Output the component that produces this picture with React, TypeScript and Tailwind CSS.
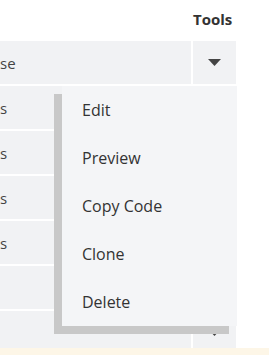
const rows = ['se', 's', 's', 's', 's', '', '']

function Caret() {
  return (
    <svg width="13" height="7" viewBox="0 0 13 7" className="block">
      <path d="M0 0h13L6.5 7z" fill="#444" />
    </svg>
  )
}

const menuItems = ['Edit', 'Preview', 'Copy Code', 'Clone', 'Delete']

export default function App() {
  return (
    <div
      className="relative w-[269px] h-[355px] overflow-hidden bg-white text-[#444]"
      style={{ fontFamily: '"Open Sans", Lato, sans-serif' }}
    >
      <div className="flex h-[41px] w-[236px]">
        <div className="flex-1" />
        <div className="w-[43px] pt-[8px] text-[15px] font-bold text-[#333]">Tools</div>
      </div>

      <div className="h-[307px] w-[236px] overflow-hidden">
        <div className="flex flex-col gap-[2px]">
          {rows.map((r, i) => (
            <div key={i} className="flex h-[43px] gap-[2px]">
              <div className="flex flex-1 items-center bg-[#f1f2f4] pt-[2px] text-[15px]">{r}</div>
              <div className="flex w-[43px] items-center justify-center bg-[#f1f2f4]">
                <Caret />
              </div>
            </div>
          ))}
        </div>
      </div>
      <div className="h-[7px] bg-[#fdf6e7]" />

      <div className="absolute left-[62px] top-[86px] w-[175px] bg-[#f4f5f7] shadow-[-8px_8px_0_#c8c8c8]">
        {menuItems.map((m) => (
          <div key={m} className="flex h-[48px] items-center pl-[20px] text-[16px] text-[#333]">
            {m}
          </div>
        ))}
      </div>
    </div>
  )
}
